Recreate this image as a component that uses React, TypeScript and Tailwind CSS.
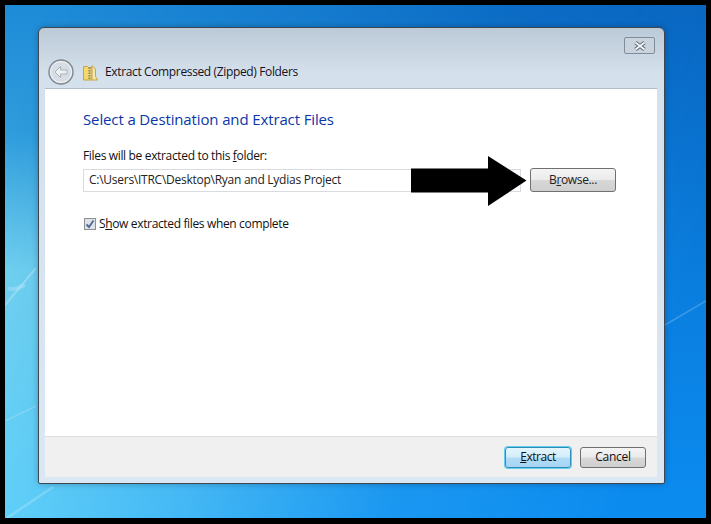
import React from "react";

const font = { fontFamily: '"Open Sans", "Noto Sans", sans-serif' };

function Desktop() {
  return (
    <svg className="absolute inset-0 w-full h-full" viewBox="0 0 701 513" preserveAspectRatio="none">
      <g fill="none" stroke="#ffffff">
        <path d="M0 300 L31 263" strokeOpacity="0.25" strokeWidth="2" />
        <path d="M3 283 C8 286 13 283 20 280" strokeOpacity="0.2" strokeWidth="4" />
        <path d="M0 416 L31 401" strokeOpacity="0.18" strokeWidth="1.5" />
        <path d="M2 513 L48 482" strokeOpacity="0.2" strokeWidth="2.5" />
        <path d="M660 320 L701 296" strokeOpacity="0.2" strokeWidth="1.5" />
      </g>
    </svg>
  );
}

function Zip() {
  return (
    <svg width="15" height="17" viewBox="0 0 15 17">
      <path d="M0.5 2.5h4l1 1h3.500v12.500h-8.500z" fill="#f6d86a" stroke="#c9a63e" />
      <path d="M9 1.500l3.500 3.500v7.500l2 3.500h-5.500z" fill="#f3e6b2" stroke="#c9a63e" />
      <path d="M6.500 3.500v12.500" stroke="#8a8a78" strokeWidth="2.200" strokeDasharray="1.500 1" />
    </svg>
  );
}

export default function App() {
  return (
    <div
      className="relative w-[711px] h-[524px] overflow-hidden border-[5px] border-b-[6px] border-black bg-[linear-gradient(180deg,#1e8bd8_0%,#2f9cdc_25%,#75d4f0_52%,#70dcfa_100%)]"
      style={font}
    >
      <div className="absolute inset-0 bg-[linear-gradient(180deg,#0865c0_0%,#0a7fe0_58%,#0c8cf0_100%)] [mask-image:linear-gradient(105deg,transparent_5%,rgba(0,0,0,0.45)_38%,rgba(0,0,0,0.85)_62%,black_90%)]" />
      <Desktop />
      <div className="relative ml-[33px] mt-[22px] w-[627px] h-[457px] flex flex-col rounded-t-[6px] rounded-b-[2px] border border-[#3e4650] bg-[linear-gradient(180deg,#bcc9d6_0px,#d4e1ed_45px,#dbe7f2_100%)] shadow-[0_0_6px_rgba(0,0,0,0.25)]">
        <div className="h-[60px] flex flex-col shrink-0">
          <div className="flex justify-end pt-[9px] pr-[9px]">
            <div className="w-[31px] h-[17px] flex items-center justify-center rounded-[2px] border border-[#7f8c9a] bg-[#c8d3de]">
              <svg width="14" height="10" viewBox="0 0 14 10">
                <path d="M2.5 1.5L11.5 8.5M11.5 1.5L2.5 8.5" stroke="#5a6470" strokeWidth="3.6" />
                <path d="M2.5 1.5L11.5 8.5M11.5 1.5L2.5 8.5" stroke="#f4f6f8" strokeWidth="1.8" />
              </svg>
            </div>
          </div>
          <div className="flex items-center pl-[9px] mt-[5px] h-[26px]">
            <svg width="26" height="26" viewBox="0 0 26 26">
              <circle cx="13" cy="13" r="12" fill="#d6dde4" stroke="#7f8790" strokeWidth="1.4" />
              <circle cx="13" cy="13" r="10.5" fill="none" stroke="#f3f5f7" strokeWidth="1" />
              <path d="M12.5 7.5L7 13l5.500 5.500v-3.500h6.500v-4h-6.500z" fill="#eef1f4" stroke="#aab2ba" strokeWidth="1" />
            </svg>
            <div className="ml-[9px] mr-[7px] flex">
              <Zip />
            </div>
            <span className="text-[12px] leading-[16px] text-[#1a1020] tracking-[-0.36px]">
              Extract Compressed (Zipped) Folders
            </span>
          </div>
        </div>
        <div className="ml-[6px] mr-[7px] mb-[6px] flex-1 flex flex-col bg-white border-t border-[#b4bcc4] min-h-0">
          <div className="flex-1 pl-[38px] pr-[41px] pt-[20px] text-[12px] text-[#111]">
            <div className="text-[15px] leading-[20px] text-[#0b37a8] tracking-[-0.13px]">
              Select a Destination and Extract Files
            </div>
            <div className="mt-[19px] leading-[16px] tracking-[-0.34px]">
              Files will be extracted to this <span className="underline">f</span>older:
            </div>
            <div className="mt-[4px] flex items-center gap-[9px]">
              <div className="flex-1 h-[23px] pl-[5px] flex items-center border border-[#d8dce0] bg-white text-[#222] tracking-[-0.26px]">
                C:\Users\ITRC\Desktop\Ryan and Lydias Project
              </div>
              <button className="w-[86px] h-[24px] flex items-center justify-center rounded-[3px] border border-[#707070] bg-[linear-gradient(180deg,#f4f4f4_0%,#ebebeb_48%,#d8d8d8_52%,#cfcfcf_100%)] text-[#222] text-[12px] tracking-[-0.35px]">
                B<span className="underline">r</span>owse...
              </button>
            </div>
            <div className="mt-[24px] flex items-center gap-[3px] leading-[16px]">
              <span className="ml-[1px] w-[12px] h-[12px] flex items-center justify-center border border-[#8e8f8f] bg-[#dfe3e8]">
                <svg width="10" height="10" viewBox="0 0 10 10">
                  <path d="M1.500 5.500L4 8L8.500 1.500" fill="none" stroke="#4a6a9a" strokeWidth="1.800" />
                </svg>
              </span>
              <span className="tracking-[-0.35px]">
                S<span className="underline">h</span>ow extracted files when complete
              </span>
            </div>
          </div>
          <div className="h-[41px] shrink-0 flex items-center justify-end gap-[9px] pr-[11px] bg-[#f0f0f0] border-t border-[#dfdfdf]">
            <button className="w-[66px] h-[21px] flex items-center justify-center rounded-[3px] border border-[#2c8fb8] bg-[linear-gradient(180deg,#e4f5fd_0%,#d3edfb_48%,#b2dcf6_52%,#a6d5f3_100%)] shadow-[0_0_0_1px_#62cdee] text-[#111] text-[12px] tracking-[-0.45px]">
              <span className="underline">E</span>xtract
            </button>
            <button className="w-[66px] h-[21px] flex items-center justify-center rounded-[3px] border border-[#707070] bg-[linear-gradient(180deg,#f4f4f4_0%,#ebebeb_48%,#d8d8d8_52%,#cfcfcf_100%)] text-[#111] text-[12px] tracking-[-0.3px]">
              Cancel
            </button>
          </div>
        </div>
      </div>
      <svg className="absolute left-[406px] top-[151px]" width="116" height="50" viewBox="0 0 116 50">
        <path d="M0 12.5H77V0L115.5 24.5L77 50V36.5H0z" fill="#000" />
      </svg>
    </div>
  );
}
